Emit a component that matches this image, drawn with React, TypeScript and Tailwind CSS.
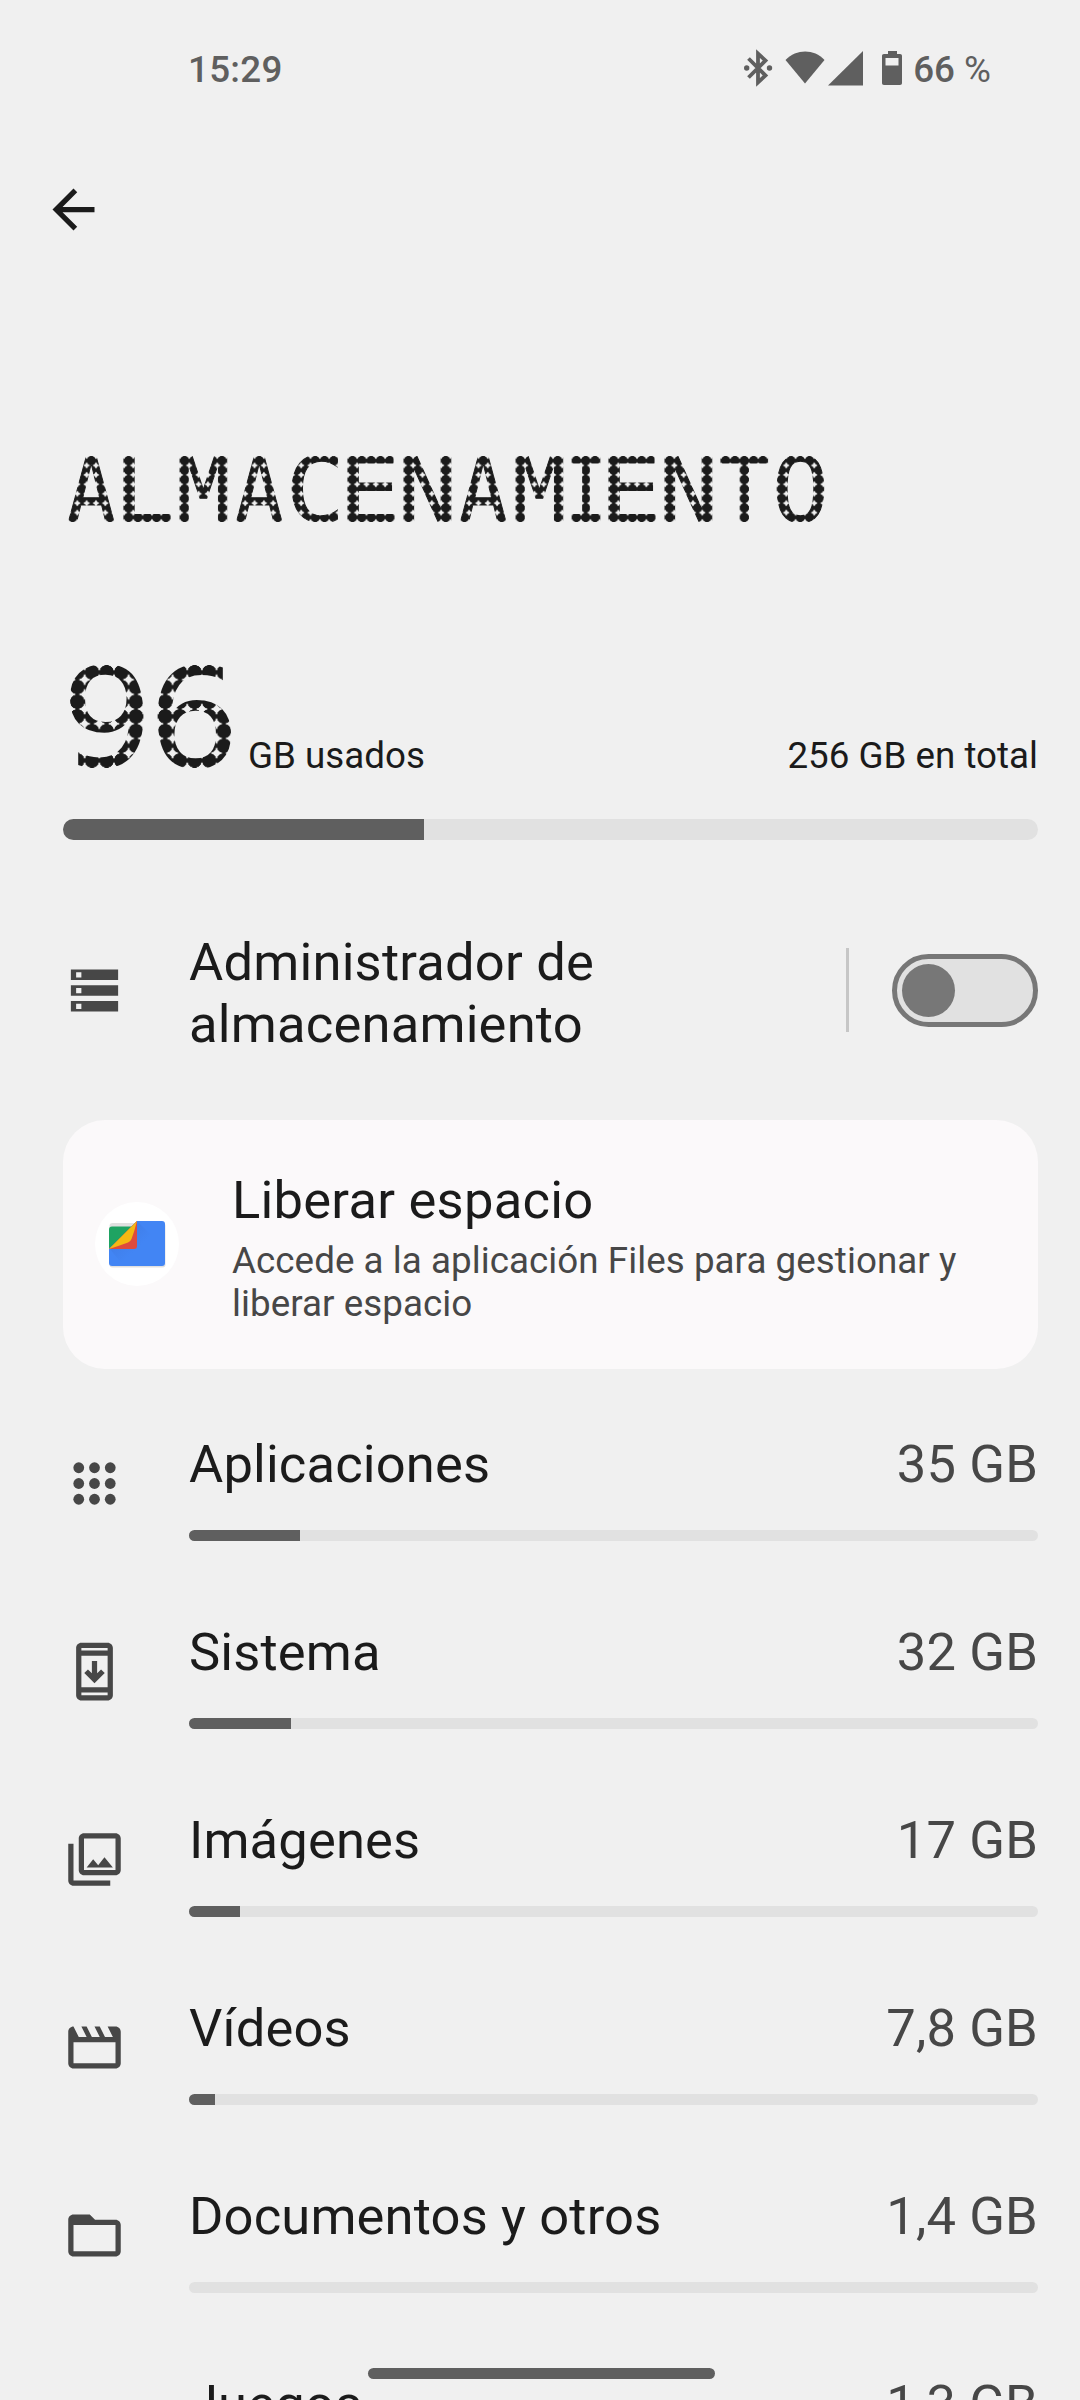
import { ReactNode } from 'react'
import { clsx } from 'clsx'

// ── Data ─────────────────────────────────────────────────────────────────────
const CATEGORIES = [
  { id: 'apps', label: 'Aplicaciones', size: '35 GB', px: 111 },
  { id: 'system', label: 'Sistema', size: '32 GB', px: 102 },
  { id: 'images', label: 'Imágenes', size: '17 GB', px: 51 },
  { id: 'videos', label: 'Vídeos', size: '7,8 GB', px: 26 },
  { id: 'docs', label: 'Documentos y otros', size: '1,4 GB', px: 0 },
  { id: 'games', label: 'Juegos', size: '1,3 GB', px: 0 },
]

// left and right ink edges of the mono glyphs, in font units (2048 per em)
const INK: Record<string, [number, number]> = {
  A: [29, 1204], L: [215, 1151], M: [86, 1145], C: [133, 1098], E: [197, 1116], N: [139, 1094],
  I: [201, 1032], T: [47, 1186], O: [115, 1118], '9': [127, 1092], '6': [139, 1104],
}

const ICONS: Record<string, ReactNode> = {
  storage: (
    <path fillRule="evenodd" d="M3 4h18v4H3zM5 5v2h2V5zM3 10h18v4H3zM5 11v2h2v-2zM3 16h18v4H3zM5 17v2h2v-2z" />
  ),
  apps: [6, 12, 18].map(y => [6, 12, 18].map(x => <circle key={`${x}-${y}`} cx={x} cy={y} r={2.05} />)),
  system: (
    <>
      <path fillRule="evenodd" d="M7 1h10c1.1 0 2 .9 2 2v18c0 1.1-.9 2-2 2H7c-1.1 0-2-.9-2-2V3c0-1.1.9-2 2-2zM7 3v1h10V3zM7 6v12h10V6zM7 20v1h10v-1z" />
      <path d="M12 16.5l-3.9-3.9 1.4-1.4 1.5 1.5V8h2v4.7l1.5-1.5 1.4 1.4z" />
    </>
  ),
  images: (
    <>
      <path fillRule="evenodd" d="M8 2h12c1.1 0 2 .9 2 2v12c0 1.1-.9 2-2 2H8c-1.1 0-2-.9-2-2V4c0-1.1.9-2 2-2zM8 4v12h12V4z" />
      <path d="M2 6v14c0 1.1.9 2 2 2h14v-2H4V6zM9 15l2.5-3.1 1.9 2.3 2.4-3.1L19 15z" />
    </>
  ),
  videos: (
    <path fillRule="evenodd" d="M4 4l2 4h3L7 4h2l2 4h3l-2-4h2l2 4h3l-2-4h3c1.1 0 2 .9 2 2v12c0 1.1-.9 2-2 2H4c-1.1 0-2-.9-2-2V6c0-1.1.9-2 2-2zM4 10v8h16v-8z" />
  ),
  docs: (
    <path fillRule="evenodd" d="M4 4h6.2l2 2H20c1.1 0 2 .9 2 2v10c0 1.1-.9 2-2 2H4c-1.1 0-2-.9-2-2V6c0-1.1.9-2 2-2zM4 8v10h16V8z" />
  ),
}

function Icon({ name }: { name: string }) {
  return (
    <svg viewBox="0 0 24 24" className="w-[63px] h-[63px] shrink-0 fill-[#474747]">
      {ICONS[name]}
    </svg>
  )
}

// ── Status Bar ───────────────────────────────────────────────────────────────
function StatusBar() {
  return (
    <header className="flex h-[178px] shrink-0 items-start justify-between pt-12 pl-[188px] pr-[89px] text-[36.75px] leading-[43px] font-medium text-[#5f5f5f]">
      <span className="tracking-[0.3px]">15:29</span>
      <div className="flex items-start">
        <svg viewBox="0 0 160 43" className="mr-[9px] h-[43px] w-[160px] fill-[#5f5f5f]">
          <path d="M4.500 10.500l17 17-7.500 7V5.500l7.500 7-17 17" fill="none" stroke="#5f5f5f" strokeWidth="3.800" />
          <circle cx="2.700" cy="20" r="2.700" />
          <circle cx="25.500" cy="20" r="2.700" />
          <path d="M41.500 12C52.500 .7 70 .7 80.500 12L61 35.500z" />
          <path d="M84 37.500L119 3v34.500z" />
          <path fillRule="evenodd" d="M144 3h9v3h3c1.300 0 2 .7 2 2v27c0 1.300-.7 2-2 2h-16c-1.300 0-2-.7-2-2V8c0-1.300.7-2 2-2h4zM141.500 10v7.500h13V10z" />
        </svg>
        <span>66 <span className="font-normal">%</span></span>
      </div>
    </header>
  )
}

// ── Dot Text ─────────────────────────────────────────────────────────────────
// Mono letters stretched over a 5-column dot grid, with one column between them
function DotText({ text, fontSize, pitch, className }: {
  text: string; fontSize: number; pitch: number; className?: string
}) {
  return (
    <span className={clsx('flex whitespace-nowrap font-["DejaVu_Sans_Mono",monospace]', className)}>
      {[...text].map((ch, i) => {
        const cols = ch === 'I' ? 3 : 5
        const [left, right] = INK[ch]
        const em = fontSize / 2048
        const scale = (cols * pitch) / ((right - left) * em)
        return (
          <span key={i} className="block shrink-0" style={{ width: (cols + 1) * pitch }}>
            <span className="block w-0 origin-left" style={{ fontSize, transform: `translateX(${-left * em * scale}px) scaleX(${scale})` }}>
              {ch}
            </span>
          </span>
        )
      })}
    </span>
  )
}

// ── Progress ─────────────────────────────────────────────────────────────────
function Bar({ px, className }: { px: number; className?: string }) {
  return (
    <div className={clsx('overflow-hidden rounded-full bg-[#e1e1e1]', className)}>
      <div className="h-full bg-[#5f5f5f]" style={{ width: px }} />
    </div>
  )
}

function FilesLogo() {
  return (
    <div className="flex h-[84px] w-[84px] shrink-0 items-center justify-center rounded-full bg-white">
      <svg viewBox="0 0 84 84" className="h-[84px] w-[84px]">
        <defs>
          <linearGradient id="fold" x1="0" y1="0" x2="1" y2="1">
            <stop offset="0" stopColor="#3a6fd0" />
            <stop offset=".6" stopColor="#4285f4" />
          </linearGradient>
        </defs>
        <rect x="14.500" y="21" width="56" height="44.500" rx="3" fill="#000" opacity=".12" />
        <path d="M42 19h25q3 0 3 3v39q0 3-3 3H17q-3 0-3-3V46z" fill="#4285f4" />
        <path d="M42 19l20 20-7 25H29L14 46h28z" fill="url(#fold)" opacity=".6" />
        <path d="M17 24.500h22L14 46.500v-19q0-3 3-3z" fill="#1ea362" />
        <path d="M42 19v25q0 3-3 3H14z" fill="#dd4b3e" />
        <path d="M42 19q-2.500 10-5.500 18-1 2.500-3.500 3.500-8 3-19 6.500z" fill="#f5b912" />
      </svg>
    </div>
  )
}

// ── Category Row ─────────────────────────────────────────────────────────────
function CategoryRow({ id, label, size, px }: { id: string; label: string; size: string; px: number }) {
  return (
    <li className="flex h-[188px] shrink-0 pl-[63px] pr-[42px]">
      <div className="w-[126px] shrink-0 pt-[19px]"><Icon name={id} /></div>
      <div className="min-w-0 flex-1">
        <div className="flex justify-between text-[52.5px] leading-[62px] tracking-[0.15px]">
          <span>{label}</span>
          <span className="text-[#474747]">{size}</span>
        </div>
        <Bar px={px} className="mt-[35px] h-[11px]" />
      </div>
    </li>
  )
}

export default function App() {
  return (
    <div className="relative flex h-[2400px] w-[1080px] flex-col overflow-hidden bg-[#f0f0f0] font-[Roboto,sans-serif] text-[#1b1b1b]">
      <StatusBar />

      <div className="h-[278px] shrink-0 pl-[42px]">
        <svg viewBox="0 0 24 24" className="h-[63px] w-[63px] fill-[#1b1b1b]">
          <path d="M20 11H7.830l5.590-5.590L12 4l-8 8 8 8 1.410-1.410L7.830 13H20z" />
        </svg>
      </div>

      <h1 className="h-[209px] shrink-0 pl-[68px]">
        <DotText
          text="ALMACENAMIENTO"
          fontSize={90}
          pitch={9.333}
          className="h-[66px] w-[770px] pt-[2px] leading-[66px] [-webkit-text-stroke:1px_#1b1b1b] [mask-image:radial-gradient(circle,#000_4.400px,transparent_5px)] [mask-size:9.333px_9.440px]"
        />
      </h1>

      <section className="shrink-0 pl-[63px] pr-[42px]">
        <div className="flex h-[154px]">
          <DotText
            text="96"
            fontSize={139}
            pitch={14.667}
            className="ml-[7px] h-[103px] w-[164px] shrink-0 pt-[3px] leading-[103px] [mask-image:radial-gradient(circle,#000_7px,transparent_7.500px)] [mask-size:14.667px_14.700px]"
          />
          <div className="ml-[14px] flex flex-1 justify-between pt-[69px] text-[36.75px] leading-[43px]">
            <span>GB usados</span>
            <span>256 GB en total</span>
          </div>
        </div>
        <Bar px={361} className="h-[21px]" />
      </section>

      <section className="mt-[91px] flex h-[124px] shrink-0 pl-[63px] pr-[42px]">
        <div className="w-[126px] pt-[28px]"><Icon name="storage" /></div>
        <p className="w-[500px] text-[52.5px] leading-[62px] tracking-[0.2px]">Administrador de almacenamiento</p>
        <div className="ml-auto mt-[17px] h-[84px] w-[3px] bg-[#c6c6c6]" />
        <button className="ml-[43px] mt-[23px] flex h-[73px] w-[146px] items-center rounded-full border-[5px] border-[#777] bg-[#e1e1e1] pl-[5px]">
          <span className="h-[53px] w-[53px] rounded-full bg-[#777]" />
        </button>
      </section>

      <section className="ml-[63px] mt-[65px] flex h-[249px] w-[975px] shrink-0 rounded-[42px] bg-[#fbf9fa] pl-8">
        <div className="mr-[53px] pt-[82px]"><FilesLogo /></div>
        <div className="w-[760px] pt-[49px]">
          <p className="text-[52.5px] leading-[62px] tracking-[0.25px]">Liberar espacio</p>
          <p className="mt-2 text-[36.75px] leading-[43px] tracking-[0.05px] text-[#474747]">
            Accede a la aplicación Files para gestionar y liberar espacio
          </p>
        </div>
      </section>

      <ul className="mt-[64px] shrink-0">
        {CATEGORIES.map(c => <CategoryRow key={c.id} {...c} />)}
      </ul>

      {/* gesture handle */}
      <div className="absolute bottom-[21px] left-[368px] h-[11px] w-[347px] rounded-full bg-[#5f5f5f]" />
    </div>
  )
}
